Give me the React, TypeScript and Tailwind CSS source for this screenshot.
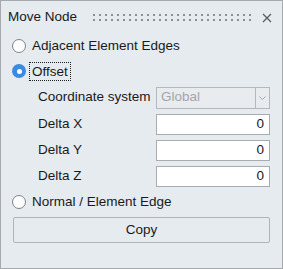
import React from "react";

function Radio({ checked }: { checked?: boolean }) {
  if (checked) {
    return (
      <span className="flex h-[14px] w-[14px] items-center justify-center rounded-full bg-[#3b8ae6]">
        <span className="h-[5px] w-[5px] rounded-full bg-white" />
      </span>
    );
  }
  return (
    <span className="block h-[14px] w-[14px] rounded-full border border-[#7e8286] bg-white" />
  );
}

function Grip() {
  return (
    <svg width="158" height="8" className="block">
      <defs>
        <pattern id="grip" width="6" height="5" patternUnits="userSpaceOnUse">
          <rect x="0" y="0" width="2" height="2" fill="#8b9095" />
        </pattern>
      </defs>
      <rect x="0" y="0" width="158" height="7" fill="url(#grip)" />
    </svg>
  );
}

function FieldRow({ label, children }: { label: string; children: React.ReactNode }) {
  return (
    <div className="flex h-[26px] items-center pl-[37px] pr-[12px]">
      <span className="w-[118px]">{label}</span>
      {children}
    </div>
  );
}

function NumberInput({ value }: { value: string }) {
  return (
    <div className="flex h-[21px] w-[114px] items-center justify-end border border-[#a8acb0] bg-white pr-[5px]">
      {value}
    </div>
  );
}

export default function App() {
  return (
    <div
      className="flex h-[269px] w-[283px] flex-col border border-[#a6aaae] bg-[#e5ebef] text-[13.5px] text-[#1a1a1a]"
      style={{ fontFamily: '"Liberation Sans", Arial, sans-serif' }}
    >
      {/* title bar */}
      <div className="flex h-[33px] items-center pl-[7px] pr-[10px]">
        <span className="w-[85px] text-[13.5px]">Move Node</span>
        <Grip />
        <svg width="10" height="10" viewBox="0 0 10 10" className="ml-auto">
          <path d="M1 1 L9 9 M9 1 L1 9" stroke="#555a5e" strokeWidth="1.2" />
        </svg>
      </div>

      <div className="flex h-[24px] items-center gap-[6px] pl-[11px]">
        <Radio />
        <span>Adjacent Element Edges</span>
      </div>

      <div className="flex h-[26px] items-center gap-[3px] pl-[11px]">
        <Radio checked />
        <span className="border border-dotted border-[#222] px-[2px] leading-[17px]">Offset</span>
      </div>

      <div className="flex h-[27px] items-center pl-[37px] pr-[12px]">
        <span className="w-[118px]">Coordinate system</span>
        <div className="flex h-[22px] w-[114px] border border-[#b5b9bd] bg-[#e8ecef]">
          <span className="flex flex-1 items-center pl-[4px] text-[#a3a6a9]">Global</span>
          <span className="flex w-[14px] items-center justify-center border-l border-[#b5b9bd]">
            <svg width="7" height="4" viewBox="0 0 7 4">
              <path d="M0.5 0.5 L3.5 3.5 L6.5 0.5" stroke="#a3a6a9" fill="none" />
            </svg>
          </span>
        </div>
      </div>

      <FieldRow label="Delta X">
        <NumberInput value="0" />
      </FieldRow>
      <FieldRow label="Delta Y">
        <NumberInput value="0" />
      </FieldRow>
      <FieldRow label="Delta Z">
        <NumberInput value="0" />
      </FieldRow>

      <div className="flex h-[26px] items-center gap-[6px] pl-[11px]">
        <Radio />
        <span>Normal / Element Edge</span>
      </div>

      <div className="px-[12px] pt-[2px]">
        <button className="flex h-[26px] w-full items-center justify-center rounded-[2px] border border-[#b0b4b8] bg-[#e5ebef]">
          Copy
        </button>
      </div>
    </div>
  );
}
